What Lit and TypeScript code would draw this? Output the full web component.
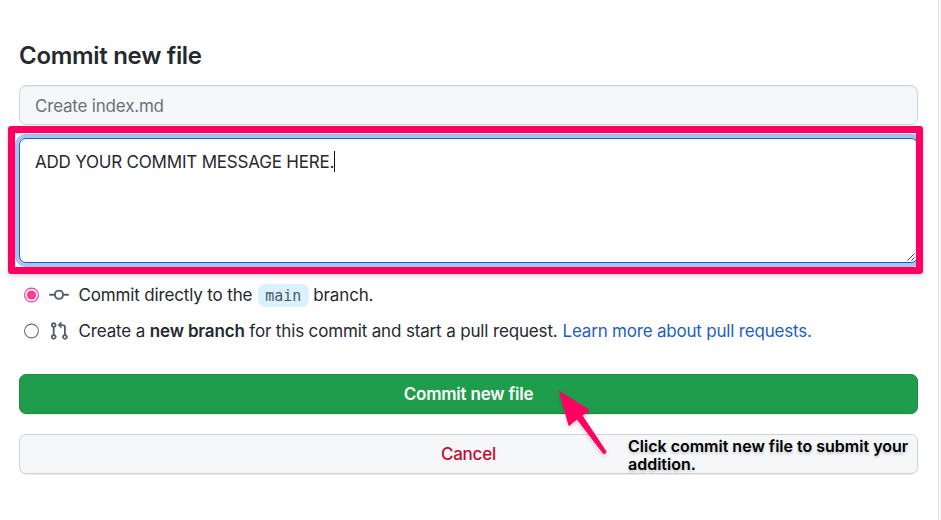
import { LitElement, html, css } from "lit";
import { customElement } from "lit/decorators.js";

@customElement("app-root")
export class AppRoot extends LitElement {
  static styles = css`
    :host {
      display: block;
      font-family: Inter, "Liberation Sans", sans-serif;
      font-size: 17px;
      color: #24292f;
    }
    * {
      box-sizing: border-box;
    }
    .page {
      position: relative;
      width: 941px;
      height: 520px;
      overflow: hidden;
      background: #fff;
      display: flex;
    }
    .form {
      width: 938px;
      padding: 40px 20px 0 19px;
      display: flex;
      flex-direction: column;
    }
    .edge {
      width: 3px;
      border-left: 1px solid #e1e1e3;
      background: #fafafa;
    }
    .title {
      margin: 0;
      height: 45px;
      font-size: 24px;
      line-height: 31px;
      font-weight: 600;
      letter-spacing: -0.3px;
    }
    .summary {
      height: 40px;
      border: 1px solid #cdd5dc;
      border-radius: 7px;
      background: #f5f7f9;
      box-shadow: inset 0 1px 1px rgba(200, 208, 216, 0.25);
      padding: 1px 15px 0;
      line-height: 39px;
      color: #69727b;
      letter-spacing: -0.2px;
    }
    .message {
      position: relative;
      margin-top: 13px;
      height: 125px;
      border: 1px solid #1760cf;
      border-radius: 7px;
      background: #fff;
      box-shadow: 0 0 0 4px #a8c6ec;
      padding: 12px 15px;
      line-height: 22px;
      letter-spacing: -0.2px;
      display: flex;
    }
    .caret {
      width: 1px;
      height: 21px;
      background: #111;
    }
    .grip {
      position: absolute;
      right: 2px;
      bottom: 1px;
    }
    .choice {
      display: flex;
      align-items: center;
      height: 36px;
      line-height: 24px;
      white-space: pre;
    }
    .choice.first {
      margin-top: 14px;
    }
    .radio {
      width: 15px;
      height: 15px;
      margin-left: 5px;
      flex: none;
      overflow: visible;
    }
    .glyph {
      width: 20px;
      height: 20px;
      margin: 0 9.5px 0 10px;
      flex: none;
      fill: #57606a;
    }
    .text {
      letter-spacing: -0.15px;
    }
    .branch {
      margin: 0 4.5px 0 5.5px;
      width: 51px;
      height: 23px;
      border-radius: 7px;
      background: #d8f2ff;
      color: #4d5965;
      font: 15px/24px "DejaVu Sans Mono", monospace;
      text-align: center;
    }
    b {
      font-weight: 600;
    }
    .link {
      margin-left: 5px;
      color: #1c5fc4;
      text-decoration: none;
      letter-spacing: -0.2px;
    }
    .button {
      height: 40px;
      border: 1px solid #1b8b43;
      border-radius: 7px;
      background: #1f9d4c;
      box-shadow: 0 1px 0 rgba(27, 31, 36, 0.08);
      color: #fff;
      text-align: center;
      font: 600 17px/38px Inter, "Liberation Sans", sans-serif;
      letter-spacing: -0.2px;
      padding: 0;
    }
    .submit {
      margin-top: 25px;
    }
    .cancel {
      margin-top: 20px;
      border-color: #d0d3d6;
      background: #f5f7f9;
      color: #c9082f;
      font-weight: 500;
    }
    .frame {
      position: absolute;
      left: 8px;
      top: 126px;
      width: 915px;
      height: 148px;
      border: 7px solid #ff0062;
      border-radius: 3px;
      box-shadow: 0 2px 5px rgba(0, 0, 0, 0.16), inset 0 1px 3px rgba(0, 0, 0, 0.12);
    }
    .arrow {
      position: absolute;
      left: 550px;
      top: 382px;
      filter: drop-shadow(0 2px 2px rgba(0, 0, 0, 0.2));
    }
    .note {
      position: absolute;
      left: 628px;
      top: 437px;
      margin: 0;
      font-size: 16px;
      line-height: 18px;
      font-weight: 600;
      color: #000;
      white-space: nowrap;
      text-shadow: 0 2px 3px rgba(0, 0, 0, 0.2);
    }
  `;

  render() {
    return html`
      <div class="page">
        <main class="form">
          <h1 class="title">Commit new file</h1>
          <div class="summary">Create index.md</div>
          <div class="message">
            <span>ADD YOUR COMMIT MESSAGE HERE.</span><i class="caret"></i>
            <svg class="grip" width="8" height="8" viewBox="0 0 8 8">
              <path d="M.5 7.5 7.5.5M4.5 7.5l3-3" fill="none" stroke="#444" stroke-width="1" />
            </svg>
          </div>
          <div class="choice first">
            <svg class="radio" viewBox="0 0 15 15">
              <circle cx="7.5" cy="7" r="6.9" fill="#fff" stroke="#ff3b94" stroke-width="1.2" />
              <circle cx="7.5" cy="7" r="4.6" fill="#ff3b94" />
            </svg>
            <svg class="glyph" viewBox="0 0 16 16">
              <path fill-rule="evenodd" d="M10.5 7.75a2.5 2.5 0 1 1-5 0 2.5 2.5 0 0 1 5 0zm1.43.75a4.002 4.002 0 0 1-7.86 0H.75a.75.75 0 1 1 0-1.5h3.32a4.001 4.001 0 0 1 7.86 0h3.32a.75.75 0 1 1 0 1.5h-3.32z" />
            </svg>
            <span class="text">Commit directly to the</span><span class="branch">main</span><span class="text">branch.</span>
          </div>
          <div class="choice">
            <svg class="radio" viewBox="0 0 15 15">
              <circle cx="7.5" cy="7" r="6.9" fill="#fff" stroke="#707070" stroke-width="1.1" />
            </svg>
            <svg class="glyph" viewBox="0 0 16 16">
              <path fill-rule="evenodd" d="M7.177 3.073 9.573.677A.25.25 0 0 1 10 .854v4.792a.25.25 0 0 1-.427.177L7.177 3.427a.25.25 0 0 1 0-.354zM3.75 2.5a.75.75 0 1 0 0 1.5.75.75 0 0 0 0-1.5zm-2.25.75a2.25 2.25 0 1 1 3 2.122v5.256a2.251 2.251 0 1 1-1.5 0V5.372A2.25 2.25 0 0 1 1.5 3.25zM11 2.5h-1V4h1a1 1 0 0 1 1 1v5.628a2.251 2.251 0 1 0 1.5 0V5A2.5 2.5 0 0 0 11 2.5zm1 10.25a.75.75 0 1 1 1.5 0 .75.75 0 0 1-1.5 0zM3.75 12a.75.75 0 1 0 0 1.5.75.75 0 0 0 0-1.5z" />
            </svg>
            <span class="text">Create a <b>new branch</b> for this commit and start a pull request.</span><a class="link">Learn more about pull requests.</a>
          </div>
          <button class="button submit">Commit new file</button>
          <button class="button cancel">Cancel</button>
        </main>
        <div class="edge"></div>
        <div class="frame"></div>
        <svg class="arrow" width="62" height="78" viewBox="0 0 62 78">
          <path d="M9.5 9.5 39.5 28.5 32 33.5 56 69.5Q56 72 53.5 71.5L27 37 19 43.5Z" fill="#ff0062" stroke="#ff0062" stroke-width="1" stroke-linejoin="round" />
        </svg>
        <p class="note">Click commit new file to submit your<br />addition.</p>
      </div>
    `;
  }
}
